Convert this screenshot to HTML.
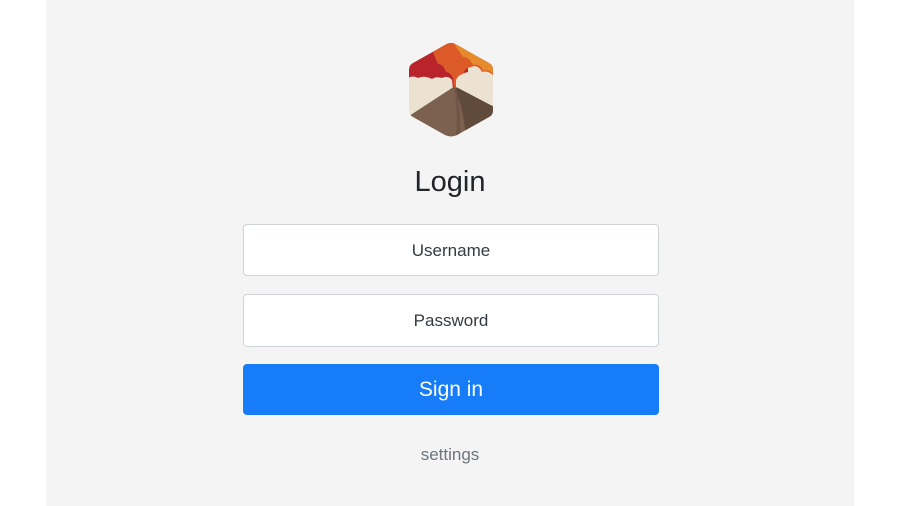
<!DOCTYPE html>
<html><head><meta charset="utf-8"><style>
html,body{margin:0;padding:0;width:900px;height:506px;background:#fff;overflow:hidden;font-family:"Liberation Sans",sans-serif}
.page{position:absolute;left:46px;top:0;width:808px;height:506px;background:#f4f4f4}
.logo{position:absolute;left:408px;top:42px}
h1{position:absolute;left:0;width:900px;top:166px;margin:0;text-align:center;font-weight:400;font-size:29px;color:#212529}
.inp{position:absolute;left:243px;width:416px;background:#fff;border:1px solid #ced4da;border-radius:4px;text-align:center;font-size:17px;color:#343a40;box-sizing:border-box}
.btn{position:absolute;left:243px;top:364px;width:416px;height:51px;background:#167cf8;border-radius:4px;color:#fff;text-align:center;line-height:51px;font-size:21px}
.set{position:absolute;left:0;width:900px;top:445px;text-align:center;color:#6c757d;font-size:17px}
</style></head><body>
<div class="page"></div>
<svg class="logo" width="86" height="96" viewBox="0 0 86 96">
<defs><clipPath id="h"><path d="M43 1 Q46 1 49 3 L81 21 Q85 23 85 28 L85 68 Q85 73 81 75 L49 93 Q43 96 37 93 L5 75 Q1 73 1 68 L1 28 Q1 23 5 21 L37 3 Q40 1 43 1Z"/></clipPath></defs>
<g clip-path="url(#h)">
<rect width="86" height="96" fill="#ebe2d2"/>
<path d="M0 0 H86 V40 H0Z" fill="#ebe2d2"/>
<path d="M0 0 H60 V30 Q50 32 47 38 L48 47 L45 47 L44 38 Q40 33 34 36 Q28 34 24 37 Q16 33 10 36 Q5 33 0 36Z" fill="#b8232c"/>
<path d="M22 0 H86 V34 Q80 28 74 30 Q70 22 63 25 Q57 26 55 32 Q50 33 48 38 L48 47 L46 47 L45 36 Q42 30 38 30 Q35 22 30 22 Q25 12 22 0Z" fill="#dc5a28"/>
<path d="M45 0 H86 V32 Q80 27 75 29 Q72 21 65 23 Q60 14 55 15 Q50 8 45 0Z" fill="#e68a2e"/>
<path d="M-2 76 L44 46 Q47 44 50 46 L88 66 L88 96 L-2 96Z" fill="#7d6150"/>
<path d="M46 46 Q55 62 58 96 L88 96 L88 66 L50 46Z" fill="#604a3c"/>
<path d="M46 46 Q50 65 48 96 L52 96 Q53 62 48 46Z" fill="#6e5545"/>
</g></svg>
<h1>Login</h1>
<div class="inp" style="top:224px;height:52px;line-height:51px">Username</div>
<div class="inp" style="top:294px;height:53px;line-height:52px">Password</div>
<div class="btn">Sign in</div>
<div class="set">settings</div>
</body></html>
